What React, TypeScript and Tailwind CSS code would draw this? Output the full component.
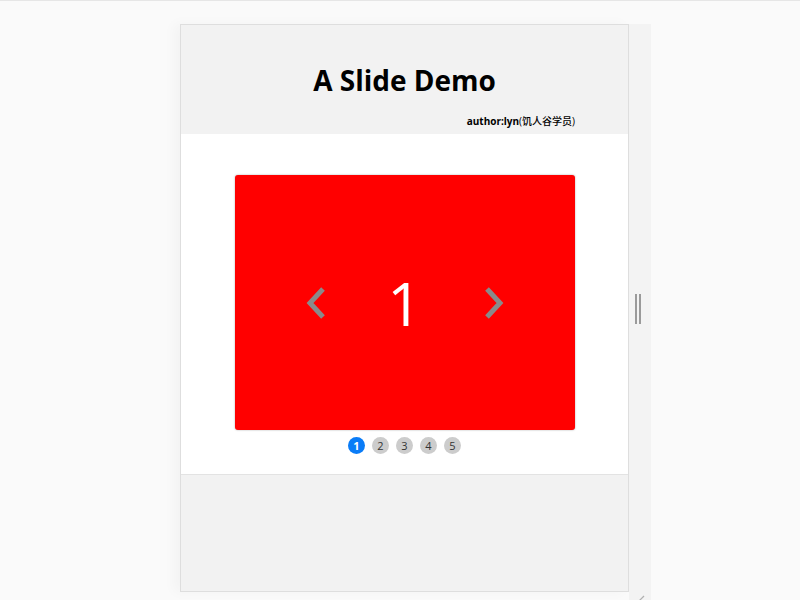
import { useState } from "react";

const slides = [
  { n: 1, color: "bg-[#ff0000]" },
  { n: 2, color: "bg-[#ff8c00]" },
  { n: 3, color: "bg-[#ffd700]" },
  { n: 4, color: "bg-[#32cd32]" },
  { n: 5, color: "bg-[#1e90ff]" },
];

const Chevron = ({ dir }: { dir: "left" | "right" }) => (
  <svg width="22" height="34" viewBox="0 0 22 34" fill="none">
    <path
      d={dir === "left" ? "M18 3 L5 17 L18 31" : "M4 3 L17 17 L4 31"}
      stroke="#8a8a8a"
      strokeWidth="5"
    />
  </svg>
);

export default function App() {
  const [current, setCurrent] = useState(0);
  const slide = slides[current];

  return (
    <div className="flex h-[600px] w-[800px] overflow-hidden border-t border-[#e6e6e6] bg-[#fafafa] pt-[23px] pl-[180px] font-['Open_Sans','Noto_Sans_CJK_SC',sans-serif]">
      <div className="flex">
        <div className="flex h-[568px] w-[449px] flex-col border border-[#dedede] bg-[#f2f2f2] shadow-[-6px_0_12px_rgba(0,0,0,0.03)]">
          <header className="flex h-[109px] flex-col pt-[36px]">
            <h1 className="text-center text-[28px] leading-[38px] font-bold text-black">
              A Slide Demo
            </h1>
            <p className="mt-[15px] pr-[53px] text-right text-[10px] leading-[14px] font-medium text-black">
              <span className="font-bold">author:lyn</span>(饥人谷学员)
            </p>
          </header>

          <section className="flex h-[341px] flex-col items-center border-b border-[#e3e3e3] bg-white pt-[41px]">
            <div
              className={`flex h-[255px] w-[340px] items-center justify-center gap-[58px] rounded-[3px] ${slide.color} shadow-[0_0_2px_rgba(0,0,0,0.35)]`}
            >
              <button onClick={() => setCurrent((current + 4) % 5)}>
                <Chevron dir="left" />
              </button>
              <span className="w-[40px] text-center text-[60px] leading-none font-normal text-white">
                {slide.n}
              </span>
              <button onClick={() => setCurrent((current + 1) % 5)}>
                <Chevron dir="right" />
              </button>
            </div>
            <div className="mt-[7px] flex gap-[7px]">
              {slides.map((s, i) => (
                <button
                  key={s.n}
                  onClick={() => setCurrent(i)}
                  className={`flex h-[17px] w-[17px] items-center justify-center rounded-full text-[11px] leading-none ${
                    i === current
                      ? "bg-[#0a7cf7] font-bold text-white"
                      : "bg-[#cccccc] text-[#333]"
                  }`}
                >
                  {s.n}
                </button>
              ))}
            </div>
          </section>

          <div className="flex-1" />
        </div>

        <div className="relative w-[22px] bg-[#f3f3f3]">
          <div className="absolute top-[270px] left-[6px] flex gap-[2px]">
            <div className="h-[30px] w-[2px] bg-[#9a9a9a]" />
            <div className="h-[30px] w-[2px] bg-[#9a9a9a]" />
          </div>
          <svg
            className="absolute bottom-[-4px] left-[7px]"
            width="9"
            height="9"
            viewBox="0 0 9 9"
          >
            <path d="M1 8 L8 1" stroke="#b0b0b0" strokeWidth="1.2" />
          </svg>
        </div>
      </div>
    </div>
  );
}
